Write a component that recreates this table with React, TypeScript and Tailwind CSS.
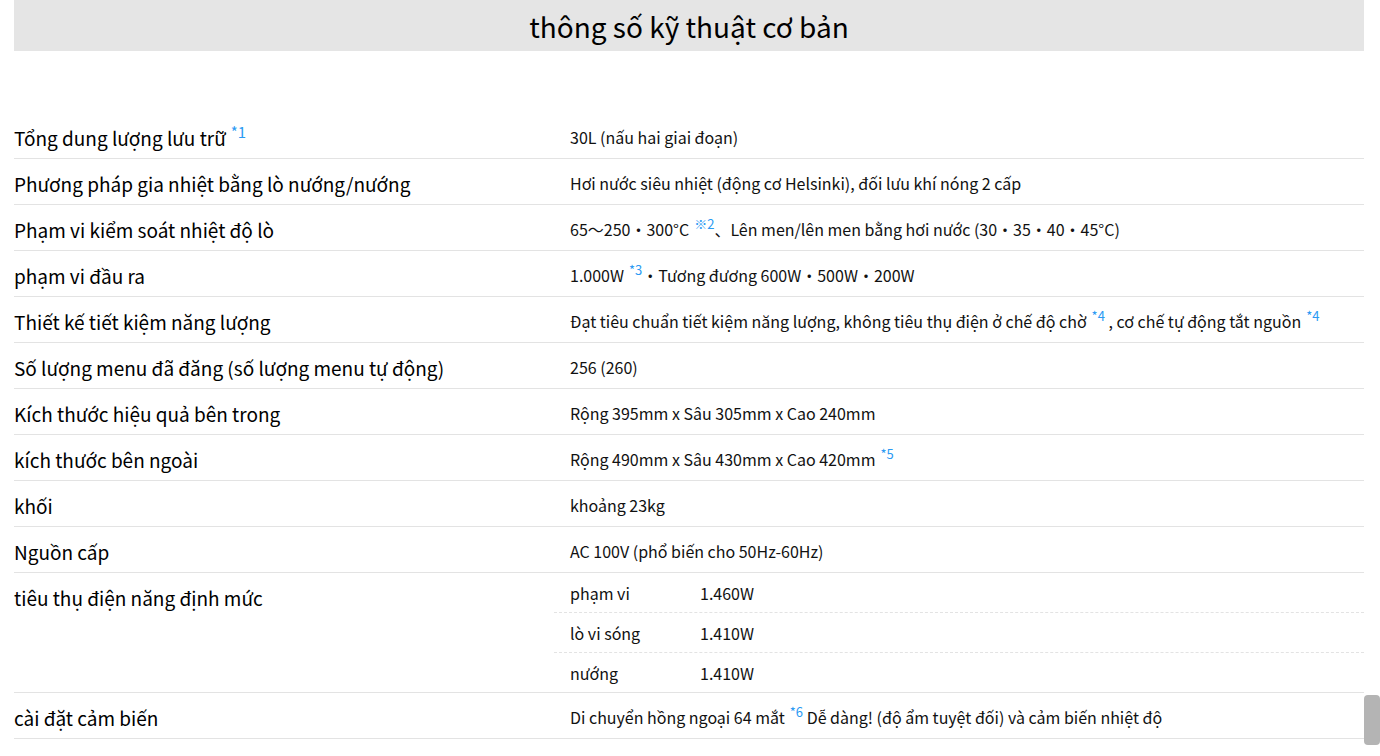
import type { ReactNode } from "react";

const font = { fontFamily: '"Noto Sans CJK JP", "Noto Sans", sans-serif' };

function Sup({ children, big }: { children: ReactNode; big?: boolean }) {
	return (
		<span
			className={`relative ml-[5px] leading-none text-[#2b9af3] ${
				big ? "-top-[8px] text-[15px]" : "-top-[7px] text-[13px]"
			}`}
		>
			{children}
		</span>
	);
}

type Row = { label: ReactNode; value: ReactNode };

const rows: Row[] = [
	{
		label: (
			<>
				Tổng dung lượng lưu trữ<Sup big>*1</Sup>
			</>
		),
		value: "30L (nấu hai giai đoạn)",
	},
	{
		label: "Phương pháp gia nhiệt bằng lò nướng/nướng",
		value: "Hơi nước siêu nhiệt (động cơ Helsinki), đối lưu khí nóng 2 cấp",
	},
	{
		label: "Phạm vi kiểm soát nhiệt độ lò",
		value: (
			<>
				65～250・300°C<Sup>※2</Sup>、Lên men/lên men bằng hơi nước (30・35・40・45°C)
			</>
		),
	},
	{
		label: "phạm vi đầu ra",
		value: (
			<>
				1.000W<Sup>*3</Sup>・Tương đương 600W・500W・200W
			</>
		),
	},
	{
		label: "Thiết kế tiết kiệm năng lượng",
		value: (
			<>
				Đạt tiêu chuẩn tiết kiệm năng lượng, không tiêu thụ điện ở chế độ chờ<Sup>*4</Sup> , cơ chế tự động tắt
				nguồn<Sup>*4</Sup>
			</>
		),
	},
	{
		label: "Số lượng menu đã đăng (số lượng menu tự động)",
		value: "256 (260)",
	},
	{
		label: "Kích thước hiệu quả bên trong",
		value: "Rộng 395mm x Sâu 305mm x Cao 240mm",
	},
	{
		label: "kích thước bên ngoài",
		value: (
			<>
				Rộng 490mm x Sâu 430mm x Cao 420mm<Sup>*5</Sup>
			</>
		),
	},
	{ label: "khối", value: "khoảng 23kg" },
	{ label: "Nguồn cấp", value: "AC 100V (phổ biến cho 50Hz-60Hz)" },
];

const power = [
	["phạm vi", "1.460W"],
	["lò vi sóng", "1.410W"],
	["nướng", "1.410W"],
];

export default function App() {
	return (
		<div className="relative h-[756px] overflow-hidden bg-white pl-[14px] pr-[16px] text-black" style={font}>
			<div className="flex h-[51px] items-center justify-center bg-[#e5e5e5]">
				<h1 className="text-[28px] leading-none text-black">thông số kỹ thuật cơ bản</h1>
			</div>

			<div className="mt-[62px]">
				{rows.map((r, i) => (
					<div key={i} className="flex border-b border-[#e3e3e3]">
						<div className="w-[540px] shrink-0 pb-[8px] pt-[12px] text-[19px] leading-[25px]">{r.label}</div>
						<div className="flex-1 whitespace-nowrap px-[16px] pb-[8px] pt-[12px] text-[16px] leading-[25px] text-[#111]">
							{r.value}
						</div>
					</div>
				))}

				<div className="flex border-b border-[#e3e3e3]">
					<div className="w-[540px] shrink-0 pt-[12px] text-[19px] leading-[25px]">tiêu thụ điện năng định mức</div>
					<div className="flex-1">
						{power.map(([k, v], i) => (
							<div
								key={k}
								className={`flex items-center px-[16px] text-[16px] text-[#111] ${
									i < power.length - 1 ? "h-[40px] border-b border-dashed border-[#e3e3e3]" : "h-[39px]"
								}`}
							>
								<span className="w-[130px]">{k}</span>
								<span>{v}</span>
							</div>
						))}
					</div>
				</div>

				<div className="flex border-b border-[#e3e3e3]">
					<div className="w-[540px] shrink-0 pb-[8px] pt-[12px] text-[19px] leading-[25px]">cài đặt cảm biến</div>
					<div className="flex-1 whitespace-nowrap px-[16px] pb-[8px] pt-[12px] text-[16px] leading-[25px] text-[#111]">
						Di chuyển hồng ngoại 64 mắt<Sup>*6</Sup> Dễ dàng! (độ ẩm tuyệt đối) và cảm biến nhiệt độ
					</div>
				</div>
			</div>

			<div className="absolute right-0 top-[695px] h-[50px] w-[16px] rounded-[4px] bg-[#b4b4b4]" />
		</div>
	);
}
